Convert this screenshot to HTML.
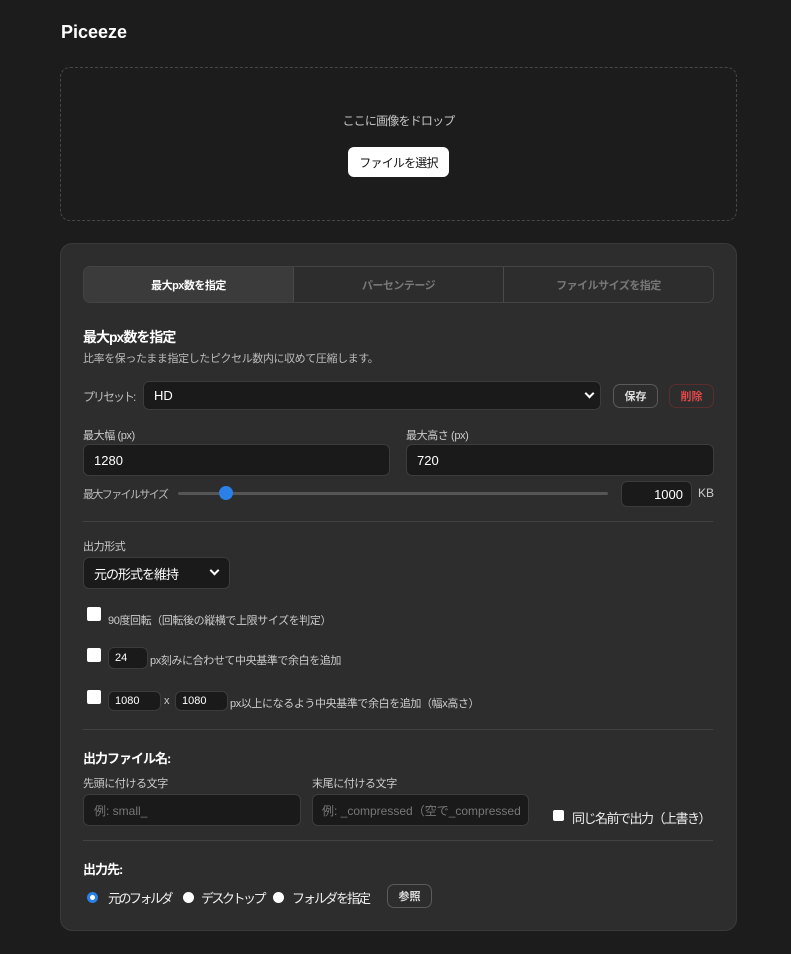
<!DOCTYPE html>
<html><head><meta charset="utf-8"><style>
*{box-sizing:border-box;margin:0;padding:0}
body{width:791px;height:954px;background:#1c1c1c;font-family:"Liberation Sans","Noto Sans CJK JP",sans-serif;color:#eee;position:relative;overflow:hidden}
.a{position:absolute;white-space:nowrap}
.box{position:absolute;background:#1a1a1a;border:1px solid #3c3c3c;border-radius:6px;color:#fff;font-size:13px;display:flex;align-items:center;padding-left:10px;white-space:nowrap}
.hr{position:absolute;left:83px;width:630px;height:1px;background:#424242}
.cb{position:absolute;width:14px;height:14px;background:#fff;border-radius:2px}
.lbl{font-size:11px;color:#ccc;letter-spacing:-0.4px}
.btn{position:absolute;border:1px solid #5a5a5a;border-radius:7px;font-size:11px;color:#ddd;display:flex;align-items:center;justify-content:center;font-weight:bold}
.chev{position:absolute;width:7px;height:7px;border-right:2px solid #fff;border-bottom:2px solid #fff;transform:rotate(45deg)}
.rad{position:absolute;width:11px;height:11px;border-radius:50%;background:#fff}
</style></head><body>
<div class="a" style="left:61px;top:22px;font-size:18px;font-weight:bold;color:#fff">Piceeze</div>
<div class="a" style="left:60px;top:67px;width:677px;height:154px;border:1px dashed #474747;border-radius:10px"></div>
<div class="a" style="left:0;width:797px;top:112px;text-align:center;font-size:12px;letter-spacing:-0.8px;color:#c4c4c4">ここに画像をドロップ</div>
<div class="a" style="left:348px;top:147px;width:101px;height:30px;background:#fff;border-radius:6px;color:#111;font-size:12px;letter-spacing:-0.8px;display:flex;align-items:center;justify-content:center">ファイルを選択</div>

<div class="a" style="left:60px;top:243px;width:677px;height:688px;background:#2d2d2d;border:1px solid #3a3a3a;border-radius:12px"></div>
<div class="a" style="left:83px;top:266px;width:631px;height:37px;border:1px solid #444;border-radius:7px;overflow:hidden;display:flex;font-size:11px;font-weight:bold;letter-spacing:-0.5px">
<div style="width:210px;background:#3b3b3b;color:#fff;display:flex;align-items:center;justify-content:center;border-right:1px solid #4a4a4a">最大px数を指定</div>
<div style="width:210px;color:#777;display:flex;align-items:center;justify-content:center;border-right:1px solid #4a4a4a">パーセンテージ</div>
<div style="flex:1;color:#777;display:flex;align-items:center;justify-content:center">ファイルサイズを指定</div></div>
<div class="a" style="left:83px;top:327px;font-size:14px;font-weight:bold;color:#fff;letter-spacing:-1px">最大px数を指定</div>
<div class="a" style="left:83px;top:350px;font-size:11px;color:#bbb;letter-spacing:-0.4px">比率を保ったまま指定したピクセル数内に収めて圧縮します。</div>
<div class="a" style="left:83px;top:388px;font-size:12px;color:#bbb;letter-spacing:-2px">プリセット:</div>
<div class="box" style="left:143px;top:381px;width:458px;height:29px">HD</div>
<div class="chev" style="left:586px;top:390px"></div>
<div class="btn" style="left:613px;top:384px;width:45px;height:24px">保存</div>
<div class="btn" style="left:669px;top:384px;width:45px;height:24px;color:#e04848;border-color:#5a2e2e">削除</div>
<div class="a lbl" style="left:83px;top:427px">最大幅 (px)</div>
<div class="a lbl" style="left:406px;top:427px">最大高さ (px)</div>
<div class="box" style="left:83px;top:444px;width:307px;height:32px">1280</div>
<div class="box" style="left:406px;top:444px;width:308px;height:32px">720</div>
<div class="a" style="left:83px;top:486px;font-size:11px;color:#bbb;letter-spacing:-1.6px">最大ファイルサイズ</div>
<div class="a" style="left:178px;top:492px;width:430px;height:3px;background:#555;border-radius:2px"></div>
<div class="a" style="left:219px;top:486px;width:14px;height:14px;border-radius:50%;background:#2a80e6"></div>
<div class="box" style="left:621px;top:481px;width:71px;height:26px;justify-content:flex-end;padding-right:8px">1000</div>
<div class="a" style="left:698px;top:486px;font-size:12px;color:#ccc">KB</div>
<div class="hr" style="top:521px"></div>
<div class="a lbl" style="left:83px;top:538px">出力形式</div>
<div class="box" style="left:83px;top:557px;width:147px;height:32px;font-size:13px;letter-spacing:-1px">元の形式を維持</div>
<div class="chev" style="left:211px;top:567px"></div>
<div class="cb" style="left:87px;top:607px"></div>
<div class="a lbl" style="left:108px;top:612px">90度回転（回転後の縦横で上限サイズを判定）</div>
<div class="cb" style="left:87px;top:648px"></div>
<div class="box" style="left:108px;top:647px;width:40px;height:22px;font-size:11px;padding-left:6px">24</div>
<div class="a lbl" style="left:150px;top:652px">px刻みに合わせて中央基準で余白を追加</div>
<div class="cb" style="left:87px;top:690px"></div>
<div class="box" style="left:108px;top:691px;width:53px;height:20px;font-size:11px;padding-left:6px">1080</div>
<div class="a lbl" style="left:164px;top:695px">x</div>
<div class="box" style="left:175px;top:691px;width:53px;height:20px;font-size:11px;padding-left:6px">1080</div>
<div class="a lbl" style="left:230px;top:695px">px以上になるよう中央基準で余白を追加（幅x高さ）</div>
<div class="hr" style="top:729px"></div>
<div class="a" style="left:83px;top:748px;font-size:13px;font-weight:bold;color:#fff;letter-spacing:-1px">出力ファイル名:</div>
<div class="a lbl" style="left:83px;top:775px">先頭に付ける文字</div>
<div class="a lbl" style="left:312px;top:775px">末尾に付ける文字</div>
<div class="box" style="left:83px;top:794px;width:218px;height:32px;color:#777;font-size:12px">例: small_</div>
<div class="box" style="left:312px;top:794px;width:217px;height:32px;color:#777;font-size:12px;overflow:hidden;padding-left:9px">例: _compressed（空で_compressed</div>
<div class="cb" style="left:553px;top:810px;width:11px;height:11px"></div>
<div class="a" style="left:572px;top:808px;font-size:13px;color:#eee;letter-spacing:-1.5px">同じ名前で出力（上書き）</div>
<div class="hr" style="top:840px"></div>
<div class="a" style="left:83px;top:859px;font-size:13px;font-weight:bold;color:#fff;letter-spacing:-1px">出力先:</div>
<div class="rad" style="left:87px;top:892px;background:#fff;border:3px solid #2a80e6"></div>
<div class="a" style="left:108px;top:888px;font-size:13px;letter-spacing:-2.5px">元のフォルダ</div>
<div class="rad" style="left:183px;top:892px"></div>
<div class="a" style="left:201px;top:888px;font-size:13px;letter-spacing:-2.5px">デスクトップ</div>
<div class="rad" style="left:273px;top:892px"></div>
<div class="a" style="left:292px;top:888px;font-size:13px;letter-spacing:-2px">フォルダを指定</div>
<div class="btn" style="left:387px;top:884px;width:45px;height:24px">参照</div>
</body></html>
